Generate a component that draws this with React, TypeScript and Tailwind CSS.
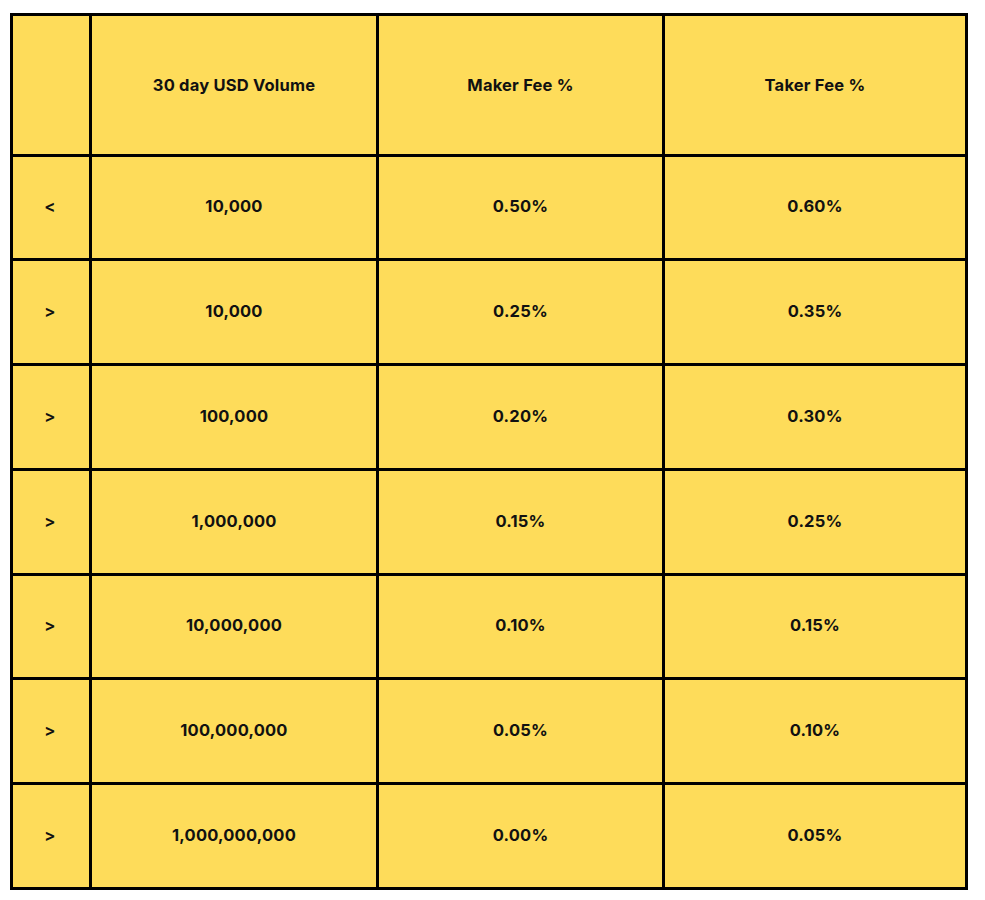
const rows = [
  { sign: "<", volume: "10,000", maker: "0.50%", taker: "0.60%" },
  { sign: ">", volume: "10,000", maker: "0.25%", taker: "0.35%" },
  { sign: ">", volume: "100,000", maker: "0.20%", taker: "0.30%" },
  { sign: ">", volume: "1,000,000", maker: "0.15%", taker: "0.25%" },
  { sign: ">", volume: "10,000,000", maker: "0.10%", taker: "0.15%" },
  { sign: ">", volume: "100,000,000", maker: "0.05%", taker: "0.10%" },
  { sign: ">", volume: "1,000,000,000", maker: "0.00%", taker: "0.05%" },
]

function Cell({ children, className = "" }: { children?: React.ReactNode; className?: string }) {
  return (
    <div className={`flex items-center justify-center bg-[#fedc5a] text-[16.5px] font-bold tracking-[0.2px] text-[#111] ${className}`}>
      {children}
    </div>
  )
}

export default function App() {
  return (
    <div className="min-h-[900px] w-[985px] bg-white pt-[13px] pl-[10px] font-['Inter',sans-serif]">
      <div className="grid w-fit grid-cols-[76px_284px_283px_300px] grid-rows-[138px_101px_102px_102px_102px_101px_102px_102px] gap-[3px] bg-black p-[3px]">
        <Cell />
        <Cell>30 day USD Volume</Cell>
        <Cell>Maker Fee %</Cell>
        <Cell>Taker Fee %</Cell>
        {rows.map((row, i) => (
          <Row key={i} {...row} />
        ))}
      </div>
    </div>
  )
}

function Row({ sign, volume, maker, taker }: { sign: string; volume: string; maker: string; taker: string }) {
  return (
    <>
      <Cell className="pr-[2px] pb-[2px]">{sign}</Cell>
      <Cell className="pb-[2px]">{volume}</Cell>
      <Cell className="pb-[2px]">{maker}</Cell>
      <Cell className="pb-[2px]">{taker}</Cell>
    </>
  )
}
